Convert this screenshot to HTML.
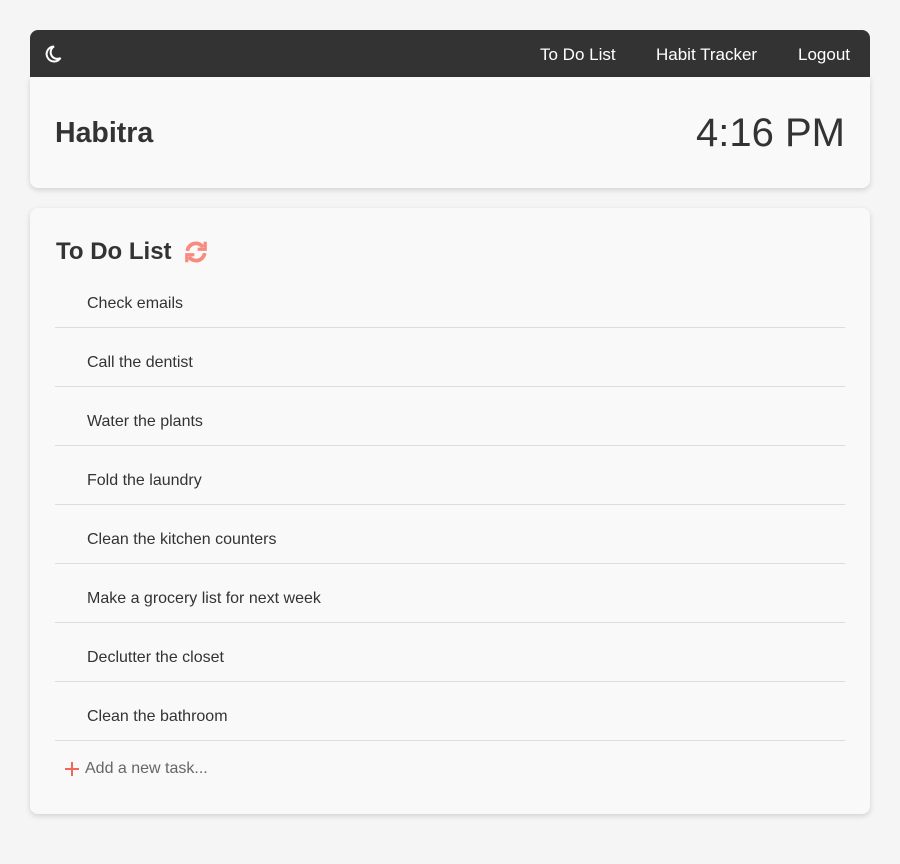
<!DOCTYPE html>
<html><head><style>
body{margin:0;background:#f5f5f5;font-family:"Liberation Sans",Arial,sans-serif;color:#333;width:900px;height:864px;overflow:hidden}
.nav{position:absolute;left:30px;top:30px;width:840px;height:47px;background:#333;border-radius:8px 8px 0 0}
.nav a{position:absolute;top:15px;color:#fff;font-size:17px}
.card1{position:absolute;left:30px;top:77px;width:840px;height:111px;background:#f9f9f9;border-radius:0 0 8px 8px;box-shadow:0 2px 6px rgba(0,0,0,.15)}
.card2{position:absolute;left:30px;top:208px;width:840px;height:606px;background:#f9f9f9;border-radius:8px;box-shadow:0 2px 6px rgba(0,0,0,.15)}
.row{position:absolute;left:25px;width:790px;height:59px;border-bottom:1px solid #ddd}
.row span{position:absolute;left:32px;top:27px;font-size:16px;color:#333}
</style></head><body>
<div class="nav">
<svg style="position:absolute;left:14px;top:15px" width="18" height="18" viewBox="0 0 18 18"><path d="M10 1.5A7.5 7.5 0 1 0 16.5 13 6 6 0 0 1 10 1.5Z" fill="none" stroke="#fff" stroke-width="2"/></svg>
<a style="left:510px">To Do List</a><a style="left:626px">Habit Tracker</a><a style="left:768px">Logout</a>
</div>
<div class="card1">
<div style="position:absolute;left:25px;top:40px;font-size:28.5px;font-weight:bold">Habitra</div>
<div style="position:absolute;right:25px;top:34px;font-size:40px">4:16 PM</div>
</div>
<div class="card2">
<div style="position:absolute;left:26px;top:30px;font-size:24px;font-weight:bold">To Do List</div>
<svg style="position:absolute;left:153px;top:31px" width="26" height="26" viewBox="0 0 24 24" fill="none" stroke="#f88b80" stroke-width="3.5"><path d="M4 11A8 8 0 0 1 18.5 7.5"/><path d="M20.5 2.5v7h-7" stroke-width="3"/><path d="M20 13A8 8 0 0 1 5.5 16.5"/><path d="M3.5 21.5v-7h7" stroke-width="3"/></svg>
<div class="row" style="top:60px"><span>Check emails</span></div>
<div class="row" style="top:119px"><span>Call the dentist</span></div>
<div class="row" style="top:178px"><span>Water the plants</span></div>
<div class="row" style="top:237px"><span>Fold the laundry</span></div>
<div class="row" style="top:296px"><span>Clean the kitchen counters</span></div>
<div class="row" style="top:355px"><span>Make a grocery list for next week</span></div>
<div class="row" style="top:414px"><span>Declutter the closet</span></div>
<div class="row" style="top:473px"><span>Clean the bathroom</span></div>
<svg style="position:absolute;left:35px;top:554px" width="14" height="14" viewBox="0 0 14 14"><path d="M7 0v14M0 7h14" stroke="#f4655a" stroke-width="2"/></svg>
<div style="position:absolute;left:55px;top:552px;font-size:16px;color:#666">Add a new task...</div>
</div>
</body></html>
